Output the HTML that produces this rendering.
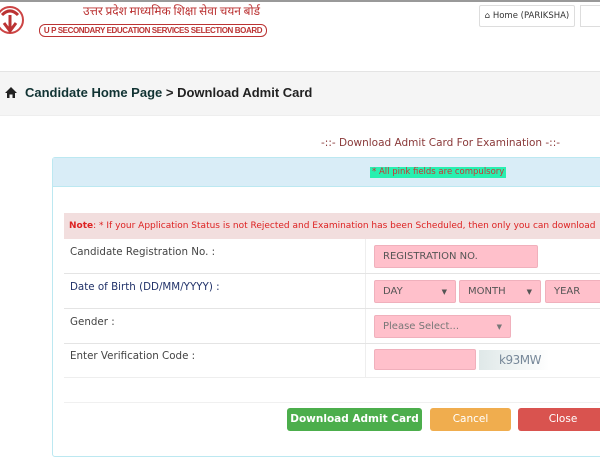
<!DOCTYPE html>
<html><head><meta charset="utf-8"><style>
*{margin:0;padding:0;box-sizing:border-box}
body{width:600px;height:450px;overflow:hidden;background:#fff;font-family:"DejaVu Sans","Liberation Sans",sans-serif;position:relative}
.a{position:absolute;white-space:nowrap}
.pk{background:#ffc0cb;border:1px solid #f0b0bc;border-radius:2px;font-size:10px;color:#555;padding-left:8px;line-height:22px}
.lbl{font-size:10.3px;color:#444;left:70px}
.hr{left:64px;width:536px;height:1px;background:#e4e4e4}
.btn{color:#fff;font-size:10.5px;text-align:center;line-height:22px;border-radius:3px;top:408px;height:23px}
.arr{position:absolute;right:8px;font-size:7px}
</style></head><body>
<div class="a" style="left:0;top:0;width:600px;height:2px;background:#999"></div>
<svg class="a" style="left:0;top:5px" width="28" height="32" viewBox="0 0 28 32"><circle cx="10" cy="15" r="13" fill="#fff" stroke="#c44" stroke-width="2"/><path d="M2 10 Q10 2 18 10 M4 18 L10 26 L16 18 M10 10 V26" stroke="#b33" stroke-width="3" fill="none"/></svg>
<div class="a" style="left:83px;top:4px;font-size:12px;color:#b33;font-family:'Noto Sans CJK SC',sans-serif;line-height:14px">उत्तर प्रदेश माध्यमिक शिक्षा सेवा चयन बोर्ड</div>
<div class="a" style="left:39px;top:24px;width:228px;height:13px;border:1px solid #b33;border-radius:6px;font-size:8px;font-weight:bold;color:#b33;line-height:11px;text-align:center;letter-spacing:-0.4px;font-family:'Liberation Sans',sans-serif">U P SECONDARY EDUCATION SERVICES SELECTION BOARD</div>
<div class="a" style="left:479px;top:5px;width:96px;height:22px;border:1px solid #ddd;border-radius:2px;font-size:8.5px;color:#333;line-height:20px;text-align:center">&#8962; Home (PARIKSHA)</div>
<div class="a" style="left:580px;top:5px;width:30px;height:22px;border:1px solid #ddd"></div>
<div class="a" style="left:0;top:71px;width:600px;height:45px;background:#f5f5f5;border-top:1px solid #e4e4e4;border-bottom:1px solid #eee"></div>
<svg class="a" style="left:5px;top:87px" width="12" height="11" viewBox="0 0 12 11"><path d="M6 0 L12 6 H10 V11 H7.5 V7.5 H4.5 V11 H2 V6 H0 Z" fill="#222"/></svg>
<div class="a" style="left:25px;top:85px;font-size:13px;font-weight:bold;color:#222;font-family:'Liberation Sans',sans-serif"><span style="color:#133">Candidate Home Page</span> &gt; Download Admit Card</div>
<div class="a" style="left:321px;top:137px;font-size:10.5px;color:#8a3a3a">-::- Download Admit Card For Examination -::-</div>
<div class="a" style="left:52px;top:157px;width:560px;height:300px;border:1px solid #bce8f1;border-radius:3px"></div>
<div class="a" style="left:53px;top:158px;width:560px;height:29px;background:#d9edf7;border-bottom:1px solid #bce8f1"></div>
<div class="a" style="left:370px;top:167px;background:#27f0b0;font-size:8.5px;color:#c33;padding:0 2px;line-height:11px">* All pink fields are compulsory</div>
<div class="a" style="left:64px;top:213px;width:536px;height:26px;background:#f2dede;font-size:9px;color:#d22;line-height:26px;padding-left:5px;overflow:hidden"><b>Note</b>: * If your Application Status is not Rejected and Examination has been Scheduled, then only you can download</div>
<div class="a" style="left:365px;top:239px;width:1px;height:138px;background:#eee"></div>
<div class="a lbl" style="top:246px">Candidate Registration No. :</div>
<div class="a pk" style="left:374px;top:245px;width:164px;height:23px">REGISTRATION NO.</div>
<div class="a hr" style="top:273px"></div>
<div class="a lbl" style="top:281px;color:#22336a">Date of Birth (DD/MM/YYYY) :</div>
<div class="a pk" style="left:374px;top:280px;width:82px;height:23px">DAY<span class="arr">▼</span></div>
<div class="a pk" style="left:459px;top:280px;width:82px;height:23px">MONTH<span class="arr">▼</span></div>
<div class="a pk" style="left:545px;top:280px;width:70px;height:23px">YEAR</div>
<div class="a hr" style="top:308px"></div>
<div class="a lbl" style="top:316px">Gender :</div>
<div class="a pk" style="left:374px;top:315px;width:137px;height:23px;color:#777">Please Select...<span class="arr">▼</span></div>
<div class="a hr" style="top:343px"></div>
<div class="a lbl" style="top:350px">Enter Verification Code :</div>
<div class="a pk" style="left:374px;top:349px;width:102px;height:21px"></div>
<div class="a" style="left:479px;top:350px;width:70px;height:20px;background:linear-gradient(90deg,#dfe8e8,#fff);font-size:12px;color:#789;line-height:20px;padding-left:20px;letter-spacing:-0.5px">k93MW</div>
<div class="a hr" style="top:377px;background:#eee"></div>
<div class="a hr" style="top:402px;background:#f0f0f0"></div>
<div class="a btn" style="left:287px;width:135px;background:#4cae4c;font-weight:bold">Download Admit Card</div>
<div class="a btn" style="left:430px;width:81px;background:#f0ad4e">Cancel</div>
<div class="a btn" style="left:518px;width:90px;background:#d9534f">Close</div>
</body></html>
